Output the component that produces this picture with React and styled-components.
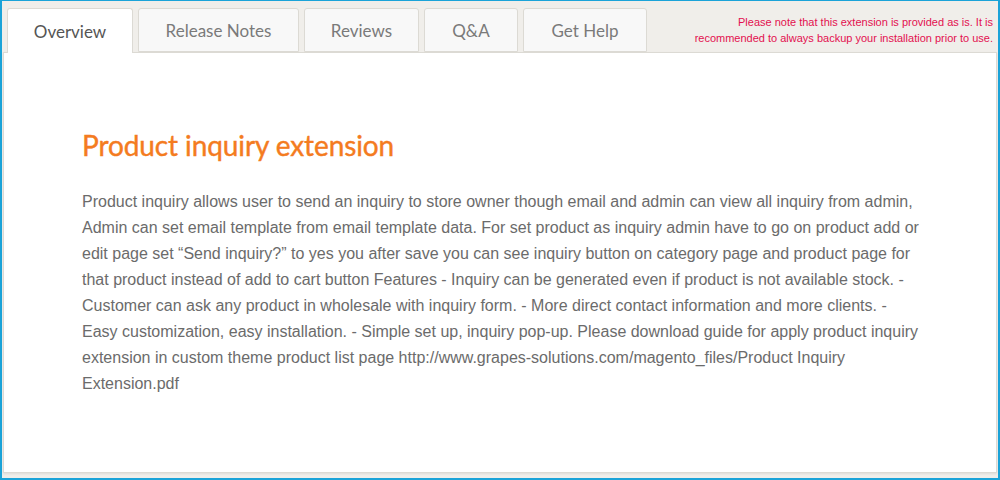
import React from 'react'
import styled, { createGlobalStyle } from 'styled-components'

const GlobalStyle = createGlobalStyle`
  html, body {
    margin: 0;
    padding: 0;
  }
  body {
    font-family: Lato, "Liberation Sans", sans-serif;
  }
`

const Page = styled.div`
  box-sizing: border-box;
  width: 1000px;
  height: 480px;
  display: flex;
  flex-direction: column;
  background: #f0eeea;
  border: 2px solid #1ba3d8;
  border-top-width: 1px;
  padding: 0 1px 5px 1px;
`

const Header = styled.div`
  display: flex;
  align-items: flex-start;
  justify-content: space-between;
  height: 51px;
`

const TabList = styled.div`
  display: flex;
  gap: 5px;
  padding: 7px 0 0 4px;
  align-self: flex-end;
`

const Tab = styled.div`
  box-sizing: border-box;
  width: ${(p) => p.width}px;
  height: ${(p) => (p.active ? 45 : 44)}px;
  margin-bottom: ${(p) => (p.active ? -1 : 0)}px;
  display: flex;
  align-items: center;
  justify-content: center;
  border: 1px solid #dcdad4;
  border-bottom: ${(p) => (p.active ? 'none' : '1px solid #dcdad4')};
  border-radius: 3px 3px 0 0;
  background: ${(p) => (p.active ? '#fff' : '#f8f8f8')};
  color: ${(p) => (p.active ? '#555' : '#7a7a7a')};
  font-family: Lato, sans-serif;
  font-size: 17px;
  position: relative;
  z-index: 1;
`

const Notice = styled.div`
  padding: 13px 4px 0 0;
  text-align: right;
  font-family: "Liberation Sans", Arial, sans-serif;
  font-size: 11px;
  line-height: 16px;
  color: #e3104f;
`

const Panel = styled.div`
  flex: 1;
  background: #fff;
  border: 1px solid #dcdad4;
  box-shadow: 0 1px 2px rgba(0, 0, 0, 0.08);
  padding: 74px 70px 0 78px;
`

const Title = styled.h1`
  margin: 0 0 26px;
  font-family: Lato, sans-serif;
  font-weight: 400;
  font-size: 28px;
  line-height: 36px;
  letter-spacing: -0.1px;
  -webkit-text-stroke: 0.4px #f47b20;
  color: #f47b20;
`

const Body = styled.p`
  margin: 0;
  max-width: 845px;
  font-family: "Liberation Sans", Arial, sans-serif;
  font-size: 16px;
  line-height: 26px;
  color: #6b6b6b;
`

const tabs = [
  { label: 'Overview', width: 126, active: true },
  { label: 'Release Notes', width: 161 },
  { label: 'Reviews', width: 115 },
  { label: 'Q&A', width: 94 },
  { label: 'Get Help', width: 124 },
]

export default function App() {
  return (
    <>
      <GlobalStyle />
      <Page>
        <Header>
          <TabList>
            {tabs.map((t) => (
              <Tab key={t.label} width={t.width} active={t.active}>
                {t.label}
              </Tab>
            ))}
          </TabList>
          <Notice>
            Please note that this extension is provided as is. It is
            <br />
            recommended to always backup your installation prior to use.
          </Notice>
        </Header>
        <Panel>
          <Title>Product inquiry extension</Title>
          <Body>
            Product inquiry allows user to send an inquiry to store owner though email and admin can view all inquiry from admin, Admin can set email template from email template data. For set product as inquiry admin have to go on product add or edit page set “Send inquiry?” to yes you after save you can see inquiry button on category page and product page for that product instead of add to cart button Features - Inquiry can be generated even if product is not available stock. - Customer can ask any product in wholesale with inquiry form. - More direct contact information and more clients. - Easy customization, easy installation. - Simple set up, inquiry pop-up. Please download guide for apply product inquiry extension in custom theme product list page http://www.grapes-solutions.com/magento_files/Product Inquiry Extension.pdf
          </Body>
        </Panel>
      </Page>
    </>
  )
}
